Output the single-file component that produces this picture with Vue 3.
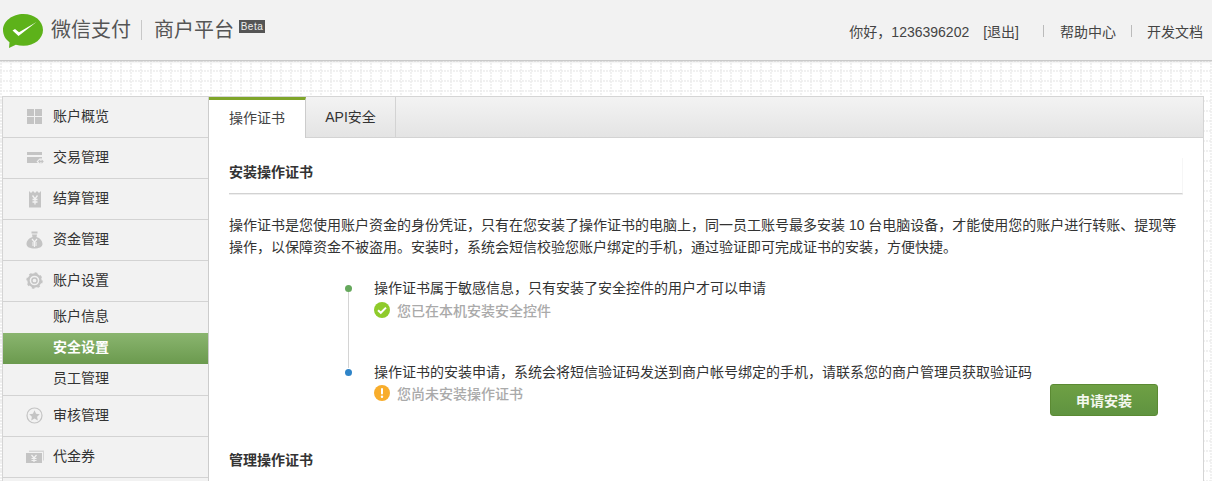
<script setup>
const menuTop = [
  { name: '账户概览', icon: 'grid' },
  { name: '交易管理', icon: 'card' },
  { name: '结算管理', icon: 'bill' },
  { name: '资金管理', icon: 'bag' },
  { name: '账户设置', icon: 'gear' },
]
const subMenu = [
  { name: '账户信息' },
  { name: '安全设置', active: true },
  { name: '员工管理' },
]
const menuBottom = [
  { name: '审核管理', icon: 'star' },
  { name: '代金券', icon: 'voucher' },
]
</script>

<template>
  <div class="page">
    <header class="topbar">
      <div class="brand">
        <svg class="logo" width="42" height="36" viewBox="0 0 42 36">
          <path d="M21.500 1C10.500 1 1 8 1 17c0 5 2.500 9.300 6.500 12.300L7 35l6.800-3.300c2.300.7 4.900 1 7.700 1 11 0 19.500-7.200 19.500-15.800C41 8 32.500 1 21.500 1z" fill="#5db21a" />
          <path d="M10.500 17.500l2.500-1.500 4 3.200L34.500 9 16.500 23z" fill="#fff" />
        </svg>
        <span class="brand-name">微信支付</span>
        <span class="brand-sep"></span>
        <span class="brand-name">商户平台</span>
        <span class="beta">Beta</span>
      </div>
      <nav class="userbar">
        <span class="hello">你好，1236396202</span>
        <a class="logout">[退出]</a>
        <i class="nav-sep first"></i>
        <a>帮助中心</a>
        <i class="nav-sep"></i>
        <a>开发文档</a>
      </nav>
    </header>

    <div class="frame">
      <aside class="side">
        <a v-for="m in menuTop" :key="m.name" class="menu-item">
          <span class="menu-icon">
            <svg width="18" height="18" viewBox="0 0 18 18" fill="#c4c4c4">
              <g v-if="m.icon === 'grid'">
                <rect x="1" y="1" width="7" height="7" />
                <rect x="9" y="1" width="7" height="7" />
                <rect x="1" y="9" width="7" height="7" />
                <rect x="9" y="9" width="7" height="7" />
              </g>
              <g v-else-if="m.icon === 'card'">
                <rect x="1" y="3" width="15" height="3" />
                <path d="M1 8h15v1.500h-2.500l-3 3 1.500 1.500H1z" />
                <path d="M12 12.500l2.200-2.200v1.500h1.400v-1.500l2.200 2.200-2.200 2.200v-1.500h-1.400v1.500z" />
              </g>
              <g v-else-if="m.icon === 'bill'">
                <path d="M3 1l2 2 2-2 2 2 2-2 2 2 2-2v16.500H3z" />
                <path d="M6.500 5.500L9 9l2.500-3.500M6.500 9.500h5M6.500 12h5M9 9v5.500" stroke="#f2f2f2" stroke-width="1.300" fill="none" />
              </g>
              <g v-else-if="m.icon === 'bag'">
                <rect x="5.500" y="0.500" width="6" height="2" />
                <path d="M6 3.500h5L10.500 6c3.500 1 6 4 6 7 0 3-3.500 4.500-8 4.500S.5 16 .5 13c0-3 2.500-6 6-7z" />
                <path d="M6 8l2.500 3L11 8M6 12h5M6 14h5M8.500 11v5" stroke="#f2f2f2" stroke-width="1.200" fill="none" />
              </g>
              <g v-else-if="m.icon === 'gear'">
                <circle cx="8.500" cy="8.500" r="6" fill="none" stroke="#c4c4c4" stroke-width="2.400" />
                <circle cx="8.500" cy="8.500" r="7.200" fill="none" stroke="#c4c4c4" stroke-width="2" stroke-dasharray="2.600 3.050" />
                <circle cx="8.500" cy="8.500" r="2.600" fill="none" stroke="#c4c4c4" stroke-width="1.500" />
              </g>
            </svg>
          </span>
          <span>{{ m.name }}</span>
        </a>
        <div class="sub-menu">
          <a v-for="s in subMenu" :key="s.name" class="sub-item" :class="{ active: s.active }">{{ s.name }}</a>
        </div>
        <a v-for="m in menuBottom" :key="m.name" class="menu-item">
          <span class="menu-icon">
            <svg width="18" height="18" viewBox="0 0 18 18" fill="#c4c4c4">
              <g v-if="m.icon === 'star'">
                <circle cx="8.500" cy="8.500" r="7.500" fill="none" stroke="#c4c4c4" stroke-width="1.200" />
                <path d="M8.500 3.300l1.600 3.400 3.700.5-2.700 2.500.7 3.700-3.300-1.800-3.300 1.800.7-3.700-2.700-2.500 3.700-.5z" />
              </g>
              <g v-else-if="m.icon === 'voucher'">
                <path d="M3 2.500h15v10h-1V4H3z" fill="#d6d6d6" />
                <rect x="0" y="5" width="16" height="10" />
                <path d="M5.500 7L8 10l2.500-3M5.500 10.500h5M5.500 12.500h5M8 10v4" stroke="#f2f2f2" stroke-width="1.200" fill="none" />
              </g>
            </svg>
          </span>
          <span>{{ m.name }}</span>
        </a>
      </aside>

      <main class="main">
        <div class="tabs">
          <a class="tab current">操作证书</a>
          <a class="tab">API安全</a>
        </div>
        <div class="content">
          <h3 class="sec-title">安装操作证书</h3>
          <p class="intro">操作证书是您使用账户资金的身份凭证，只有在您安装了操作证书的电脑上，同一员工账号最多安装 10 台电脑设备，才能使用您的账户进行转账、提现等操作，以保障资金不被盗用。安装时，系统会短信校验您账户绑定的手机，通过验证即可完成证书的安装，方便快捷。</p>

          <div class="steps">
            <div class="step step-one">
              <i class="dot green"></i>
              <p>操作证书属于敏感信息，只有安装了安全控件的用户才可以申请</p>
              <div class="state">
                <svg width="16" height="16" viewBox="0 0 16 16">
                  <circle cx="8" cy="8" r="8" fill="#8fcb2b" />
                  <path d="M4 8.200l2.800 2.600L12 5.600" fill="none" stroke="#fff" stroke-width="2" />
                </svg>
                <span>您已在本机安装安全控件</span>
              </div>
            </div>
            <div class="step">
              <i class="dot blue"></i>
              <p>操作证书的安装申请，系统会将短信验证码发送到商户帐号绑定的手机，请联系您的商户管理员获取验证码</p>
              <div class="state second-state">
                <svg width="16" height="16" viewBox="0 0 16 16">
                  <circle cx="8" cy="8" r="8" fill="#f8ad2c" />
                  <rect x="7" y="3" width="2" height="6.500" rx="1" fill="#fff" />
                  <circle cx="8" cy="11.800" r="1.200" fill="#fff" />
                </svg>
                <span>您尚未安装操作证书</span>
              </div>
              <button class="apply">申请安装</button>
            </div>
          </div>

          <h3 class="sec-title second">管理操作证书</h3>
        </div>
      </main>
    </div>
  </div>
</template>

<style>
html,
body {
  margin: 0;
  height: 100%;
  overflow: hidden;
  background: #fff;
}
</style>

<style scoped>
.page {
  height: 481px;
  overflow: hidden;
  font-family: "Liberation Sans", "Noto Sans CJK SC", sans-serif;
  font-size: 14px;
  color: #333;
  background-color: #fff;
  background-image:
    radial-gradient(circle at 1px 1px, #ececec 0.6px, transparent 1px),
    radial-gradient(circle at 1px 1px, #ececec 0.6px, transparent 1px);
  background-size: 3px 10px, 10px 3px;
}

.topbar {
  height: 60px;
  display: flex;
  justify-content: space-between;
  align-items: center;
  background: #f2f2f2;
  border-bottom: 1px solid #c9c9c9;
  box-shadow: 0 1px 2px rgba(0, 0, 0, 0.12);
}

.brand {
  display: flex;
  align-items: center;
  padding-left: 2px;
  height: 60px;
}

.logo {
  margin-top: 1px;
  margin-right: 7px;
}

.brand-name {
  font-size: 20px;
  color: #555;
  line-height: 62px;
}

.brand-sep {
  width: 1px;
  height: 20px;
  margin: 0 12px 0 10px;
  background: #c8c8c8;
}

.beta {
  align-self: flex-start;
  margin: 20px 0 0 5px;
  width: 26px;
  height: 13px;
  background: #555;
  color: #eee;
  font-size: 10px;
  line-height: 13px;
  text-align: center;
  letter-spacing: 0.5px;
}

.userbar {
  display: flex;
  align-items: center;
  padding: 2px 9px 0 0;
  color: #444;
  font-size: 14px;
}

.logout {
  margin-left: 14px;
}

.nav-sep {
  width: 1px;
  height: 12px;
  margin: 0 15px;
  background: #bbb;
}

.nav-sep.first {
  margin-left: 24px;
  margin-right: 16px;
}

.frame {
  display: flex;
  margin: 35px 8px 0 2px;
  border: 1px solid #d5d5d5;
  background: #fff;
  height: 400px;
}

.side {
  width: 205px;
  flex-shrink: 0;
  background: #f2f2f2;
  border-right: 1px solid #ccc;
}

.menu-item {
  display: flex;
  align-items: center;
  box-sizing: border-box;
  height: 41px;
  border-bottom: 1px solid #d3d3d3;
  padding: 0 0 4px 23px;
  color: #333;
}

.menu-icon {
  width: 27px;
  height: 18px;
  flex-shrink: 0;
  margin-top: 4px;
}

.sub-menu {
  border-bottom: 1px solid #d3d3d3;
}

.sub-item {
  display: block;
  height: 31px;
  line-height: 28px;
  padding-left: 50px;
  color: #333;
}

.sub-item.active {
  color: #fff;
  font-weight: bold;
  background: linear-gradient(#8ab56f, #6b9a4e);
}

.main {
  flex: 1;
  min-width: 0;
}

.tabs {
  display: flex;
  height: 41px;
  background: linear-gradient(#f3f3f3, #e4e4e4);
  border-bottom: 1px solid #d3d3d3;
  box-sizing: border-box;
}

.tab {
  width: 97px;
  box-sizing: border-box;
  height: 40px;
  line-height: 41px;
  text-align: center;
  color: #333;
}

.tab:nth-child(2) {
  width: 90px;
  border-right: 1px solid #d3d3d3;
}

.tab.current {
  height: 41px;
  background: #fff;
  border-top: 3px solid #7fa52a;
  border-right: 1px solid #ccc;
  line-height: 36px;
  color: #444;
}

.content {
  padding: 0 20px;
}

.sec-title {
  margin: 20px 0 0;
  height: 36px;
  line-height: 28px;
  box-sizing: border-box;
  font-size: 14px;
  color: #333;
  border-bottom: 1px solid #d2d2d2;
  border-right: 1px solid #f6f6f6;
  box-shadow: 0 1px 0 #eee;
}

.sec-title.second {
  border: 0;
  box-shadow: none;
  height: 40px;
  line-height: 40px;
  margin-top: 37px;
}

.intro {
  margin: 20px 0 0;
  line-height: 22px;
  color: #333;
}

.steps {
  margin: 19px 0 0 145px;
  position: relative;
}

.step {
  position: relative;
}

.step-one {
  height: 84px;
}

.step-one::before {
  content: "";
  position: absolute;
  left: -26px;
  top: 11px;
  width: 1px;
  height: 80px;
  background: #d4d4d4;
}

.step p {
  margin: 0;
  line-height: 22px;
  color: #333;
}

.dot {
  position: absolute;
  left: -29px;
  top: 8px;
  width: 7px;
  height: 7px;
  border-radius: 50%;
}

.dot.green {
  background: #65a85c;
}

.dot.blue {
  background: #2f84c8;
}

.state {
  display: flex;
  align-items: center;
  gap: 7px;
  height: 22px;
  color: #aaa;
  font-weight: 500;
}

.second-state {
  height: 20px;
}

.apply {
  position: absolute;
  left: 676px;
  top: 23px;
  width: 108px;
  height: 32px;
  border: 1px solid #5b8a33;
  border-radius: 3px;
  background: linear-gradient(#6ea044, #5f9340);
  color: #f4f7ee;
  font-family: inherit;
  font-size: 14px;
  font-weight: bold;
}
</style>
